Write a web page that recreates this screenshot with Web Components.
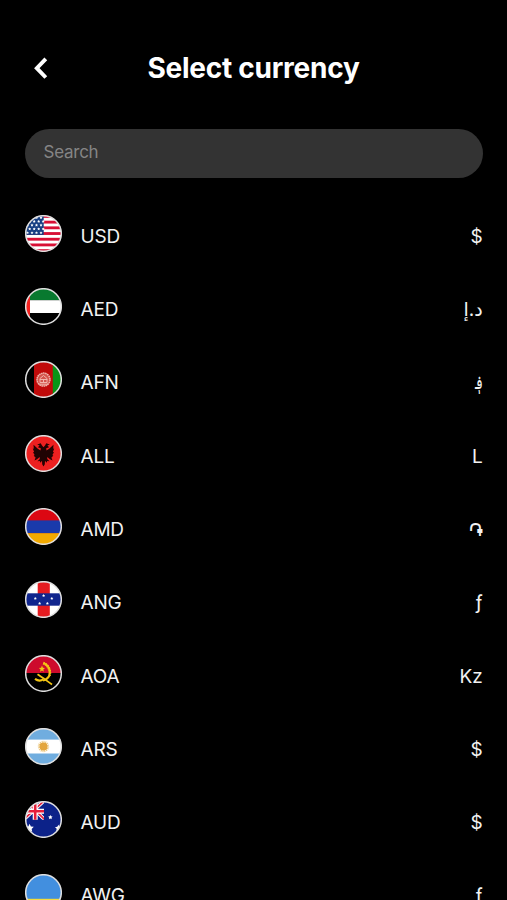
<!DOCTYPE html>
<html lang="en">
<head>
<meta charset="utf-8">
<title>Select currency</title>
<style>
  body {
    margin: 0;
    height: 900px;
    overflow: hidden;
    background: #000;
    color: #f2f2f2;
    font-family: Inter, "DejaVu Sans", sans-serif;
  }
</style>
</head>
<body>
<currency-screen></currency-screen>

<script>
(function() {

  const star = (x, y, r) => {
    let pts = '';
    for (let i = 0; i < 10; i++) {
      const a = Math.PI * i / 5 - Math.PI / 2;
      const d = i % 2 ? r * 0.5 : r;
      pts += `${(x + d * Math.cos(a)).toFixed(2)},${(y + d * Math.sin(a)).toFixed(2)} `;
    }
    return `<polygon fill="#fff" points="${pts}"/>`;
  };

  const usStripes = () => {
    let s = '';
    for (let i = 0; i < 13; i += 2) s += `<rect y="${i * 2.85}" width="37" height="2.85" fill="#d80f35"/>`;
    return s;
  };

  const usStars = () => {
    let s = '';
    for (let r = 0; r < 5; r++) {
      for (let c = 0; c < 4; c++) s += star(2.5 + c * 4.5 + (r % 2 ? 2.2 : 0), 2.6 + r * 3.8, 1.6);
    }
    return s;
  };

  // Flag artwork on a 37x37 canvas, clipped to a circle by currency-flag
  const flags = {
    us: `<rect width="37" height="37" fill="#fff"/>${usStripes()}<rect width="18.7" height="19.9" fill="#173f83"/>${usStars()}`,
    ae: `<rect width="37" height="37" fill="#000"/><rect width="37" height="12.2" fill="#08792f"/>
      <rect y="12.2" width="37" height="12.8" fill="#fff"/><rect width="5" height="37" fill="#f4211f"/>`,
    af: `<rect width="37" height="37" fill="#000"/><rect x="9" width="19" height="37" fill="#c00a0a"/><rect x="27.8" width="10" height="37" fill="#089517"/>
      <circle cx="18.5" cy="18.6" r="6.5" fill="#d4534c"/>
      <g fill="none" stroke="#f0b5ac"><circle cx="18.5" cy="18.6" r="6.5" stroke-width="1.5" stroke-dasharray="1.6 .5"/>
      <path d="M15 21.5v-4l3.5-3 3.5 3v4zM14.8 18.5h7.4M18.5 18v4M14 23.2h9" stroke-width="1"/></g>`,
    al: `<rect width="37" height="37" fill="#ed2020"/>
      <path fill="#210303" d="M18.5 12.2 16.8 10.3 15.8 8.2 12.2 9.4 14.6 10.4 12.9 12.3 15.8 13.2 15.5 15.5 12.8 13.8 8.5 9.8 8.8 13.8 7.8 13.6 9.1 17 8 17.2 9.6 20 8.7 20.7 10.6 22.5 9.5 25.5 12 24.2 14.7 22 14.8 24.1 12.4 26.3 14.8 26.1 15.4 27.7 17 25.7 17.2 29.2 18.5 31.4 19.8 29.2 20 25.7 21.6 27.7 22.2 26.1 24.6 26.3 22.2 24.1 22.3 22 25 24.2 27.5 25.5 26.4 22.5 28.3 20.7 27.4 20 29 17.2 27.9 17 29.2 13.6 28.2 13.8 28.5 9.8 24.2 13.8 21.5 15.5 21.2 13.2 24.1 12.3 22.4 10.4 24.8 9.4 21.2 8.2 20.2 10.3z"/>`,
    am: `<rect width="37" height="37" fill="#dc0712"/><rect y="12.4" width="37" height="13" fill="#1a3aab"/><rect y="25.2" width="37" height="12" fill="#f2a900"/>`,
    an: `<rect width="37" height="37" fill="#fff"/><rect x="12.7" width="12.1" height="37" fill="#e51b20"/><rect y="12.3" width="37" height="12.4" fill="#10258d"/>
      ${star(10.3, 17.5, 1.6)}${star(18.6, 14.7, 1.6)}${star(26.8, 17.5, 1.6)}${star(14.6, 22.4, 1.6)}${star(22.4, 22.4, 1.6)}`,
    ao: `<rect width="37" height="37" fill="#000"/><rect width="37" height="18" fill="#cd0b2c"/>
      <g fill="none" stroke="#f3c514"><path d="M18.6 8.1A10 10 0 0 1 24.5 20.2Q22.5 24.4 18 25.6" stroke-width="2.1"/>
      <path d="M18.2 8.1A10.4 10.4 0 0 1 24.5 20.5" stroke-width="2.8" stroke-dasharray="1.3 1.1"/>
      <path d="M12.5 19.3C16 21.5 20 24.5 27 29.5" stroke-width="1.8"/><path d="M10 23.8q4.2 3.1 8.2.6" stroke-width="2.2"/></g>
      <polygon fill="#f3c514" points="17,10.6 17.9,12.8 20,13 18.3,14.5 18.9,16.7 17,15.5 15,16.7 15.6,14.4 13.9,13 16.1,12.8"/>`,
    ar: `<rect width="37" height="37" fill="#fff"/><rect width="37" height="11.6" fill="#70addf"/><rect y="25.5" width="37" height="12" fill="#70addf"/>
      <circle cx="18.5" cy="18.5" r="4.7" fill="none" stroke="#ecca83" stroke-width="2" stroke-dasharray="1 .8"/><circle cx="18.5" cy="18.5" r="4" fill="#e3a63e"/>`,
    au: `<rect width="37" height="37" fill="#0c2289"/>
      <svg width="19" height="18.7" viewBox="0 0 19 18.7">
        <path d="M0-1 20 19M-4 21 20-1" stroke="#fff" stroke-width="3.6"/><path d="M0-1 20 19M-4 21 20-1" stroke="#e51e3a" stroke-width="1.6"/>
        <path d="M10.2 0v19M0 10.2h19" stroke="#fff" stroke-width="5"/><path d="M10.2 0v19M0 10.2h19" stroke="#e51e3a" stroke-width="2.6"/>
      </svg>${star(25.4, 16.3, 2.3)}${star(4.6, 27.2, 4.4)}${star(33.4, 27.3, 3.6)}`,
    aw: `<rect width="37" height="37" fill="#428fdf"/><rect y="24.8" width="37" height="2" fill="#f4dc3e"/>`
  };

  // [flag, code, symbol, optional symbol style]
  const currencies = [
    ['us', 'USD', '$'],
    ['ae', 'AED', 'د.إ'],
    ['af', 'AFN', '؋', 'display: inline-block; transform: scaleX(.72); transform-origin: 100% 50%'],
    ['al', 'ALL', 'L'],
    ['am', 'AMD', '֏', 'font-family: "DejaVu Sans"; font-weight: 200'],
    ['an', 'ANG', 'ƒ'],
    ['ao', 'AOA', 'Kz'],
    ['ar', 'ARS', '$'],
    ['au', 'AUD', '$'],
    ['aw', 'AWG', 'ƒ']
  ];

  class CurrencyFlag extends HTMLElement {
    connectedCallback() {
      this.attachShadow({ mode: 'open' }).innerHTML = `
        <style>
          :host { display: block; width: 37px; height: 37px; flex: none; }
          svg { display: block; }
        </style>
        <svg width="37" height="37" viewBox="0 0 37 37">
          <clipPath id="round"><circle cx="18.5" cy="18.5" r="18"/></clipPath>
          <g clip-path="url(#round)">${flags[this.getAttribute('country')]}</g>
          <circle cx="18.5" cy="18.5" r="17.8" fill="none" stroke="#dedede" stroke-width="1.5"/>
        </svg>
      `;
    }
  }

  class CurrencyRow extends HTMLElement {
    connectedCallback() {
      this.attachShadow({ mode: 'open' }).innerHTML = `
        <style>
          :host {
            display: flex;
            align-items: flex-start;
            height: 73.3px;
            font-size: 19px;
            line-height: 24px;
          }
          .code { padding: 10px 0 0 18.5px; letter-spacing: -0.2px; }
          .symbol { margin-left: auto; padding-top: 10px; }
        </style>
        <slot name="flag"></slot>
        <span class="code"><slot name="code"></slot></span>
        <span class="symbol"><slot></slot></span>
      `;
    }
  }

  class ScreenHeader extends HTMLElement {
    connectedCallback() {
      this.attachShadow({ mode: 'open' }).innerHTML = `
        <style>
          :host {
            display: grid;
            grid-template-columns: 40px 1fr 40px;
            align-items: center;
            height: 36px;
            padding: 50px 25px 43px;
          }
          svg { display: block; }
          h1 {
            margin: 0;
            color: #fff;
            font-size: 28px;
            line-height: 36px;
            font-weight: 700;
            letter-spacing: -0.25px;
            text-align: center;
            white-space: nowrap;
          }
        </style>
        <svg width="32" height="32" viewBox="0 0 32 32" fill="none" stroke="#fff" stroke-width="3.9">
          <path d="M20.8 6.9 11.8 16.2 20.8 25.5"/>
        </svg>
        <h1><slot></slot></h1>
      `;
    }
  }

  class SearchField extends HTMLElement {
    connectedCallback() {
      this.attachShadow({ mode: 'open' }).innerHTML = `
        <style>
          :host {
            display: block;
            box-sizing: border-box;
            height: 49px;
            margin: 0 24.5px 0 25px;
            padding: 12px 18.5px;
            border-radius: 25px;
            background: #333;
            color: #858585;
            font-size: 17px;
            line-height: 22px;
            letter-spacing: -0.25px;
          }
        </style>
        <slot></slot>
      `;
    }
  }

  class CurrencyScreen extends HTMLElement {
    connectedCallback() {
      const rows = currencies.map(([flag, code, symbol, style = '']) => `
        <currency-row>
          <currency-flag slot="flag" country="${flag}"></currency-flag>
          <span slot="code">${code}</span>
          <bdi style='${style}'>${symbol}</bdi>
        </currency-row>`).join('');
      this.attachShadow({ mode: 'open' }).innerHTML = `
        <style>
          :host { display: block; height: 900px; overflow: hidden; }
          .list { padding: 36.8px 24.3px 0 25px; }
        </style>
        <screen-header>Select currency</screen-header>
        <search-field>Search</search-field>
        <div class="list">${rows}</div>
      `;
    }
  }

  customElements.define('currency-flag', CurrencyFlag);
  customElements.define('currency-row', CurrencyRow);
  customElements.define('screen-header', ScreenHeader);
  customElements.define('search-field', SearchField);
  customElements.define('currency-screen', CurrencyScreen);

})();
</script>
</body>
</html>
